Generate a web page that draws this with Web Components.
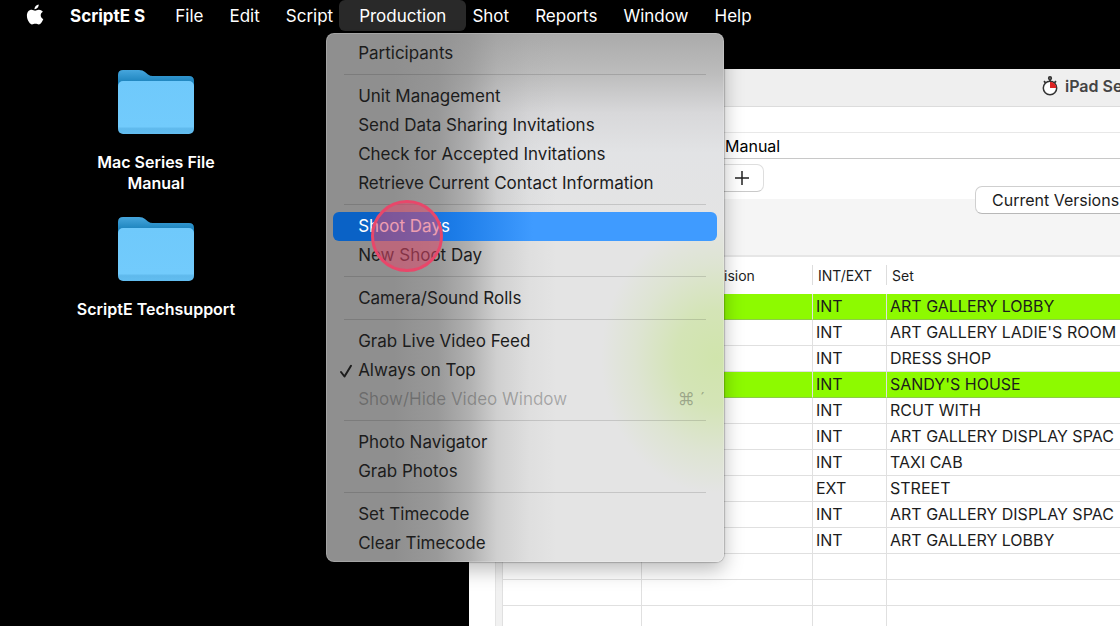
<!DOCTYPE html>
<html lang="en">
<head>
<meta charset="utf-8">
<title>ScriptE S</title>
<style>
  body { margin: 0; background: #000; font-family: Inter, "Liberation Sans", sans-serif; font-size: 16px; }
</style>
</head>
<body>
<mac-desktop>
  <menu-bar slot="bar">
    <menu-title strong>ScriptE S</menu-title>
    <menu-title>File</menu-title>
    <menu-title>Edit</menu-title>
    <menu-title>Script</menu-title>
    <menu-title open>Production
      <drop-menu slot="menu">
        <menu-row>Participants</menu-row>
        <menu-rule></menu-rule>
        <menu-row>Unit Management</menu-row>
        <menu-row>Send Data Sharing Invitations</menu-row>
        <menu-row>Check for Accepted Invitations</menu-row>
        <menu-row>Retrieve Current Contact Information</menu-row>
        <menu-rule></menu-rule>
        <menu-row active>Shoot Days</menu-row>
        <menu-row>New Shoot Day</menu-row>
        <menu-rule></menu-rule>
        <menu-row>Camera/Sound Rolls</menu-row>
        <menu-rule></menu-rule>
        <menu-row>Grab Live Video Feed</menu-row>
        <menu-row checked>Always on Top</menu-row>
        <menu-row disabled>Show/Hide Video Window<span slot="key">⌘ ´</span></menu-row>
        <menu-rule></menu-rule>
        <menu-row>Photo Navigator</menu-row>
        <menu-row>Grab Photos</menu-row>
        <menu-rule></menu-rule>
        <menu-row>Set Timecode</menu-row>
        <menu-row>Clear Timecode</menu-row>
      </drop-menu>
    </menu-title>
    <menu-title>Shot</menu-title>
    <menu-title>Reports</menu-title>
    <menu-title>Window</menu-title>
    <menu-title>Help</menu-title>
  </menu-bar>
  <desk-folder>Mac Series File Manual</desk-folder>
  <desk-folder>ScriptE Techsupport</desk-folder>
  <app-window slot="window">
    <span slot="title">iPad Se</span>
    <span slot="tab">Manual</span>
    <scene-table></scene-table>
  </app-window>
  <click-ring slot="pointer"></click-ring>
</mac-desktop>

<script>
function define(name, html, setup) {
  const template = document.createElement('template');
  template.innerHTML = html;
  customElements.define(name, class extends HTMLElement {
    constructor() {
      super();
      this.attachShadow({ mode: 'open' }).append(template.content.cloneNode(true));
    }
    connectedCallback() { if (setup) setup(this, this.shadowRoot); }
  });
}

define('mac-desktop', `
  <style>
    :host { display: block; position: relative; min-height: 100vh; overflow: hidden; background: #000; }
    nav { position: relative; z-index: 2; }
    .icons { display: flex; flex-direction: column; gap: 22px; width: 180px; padding: 37px 66px; }
  </style>
  <nav aria-label="Menu bar"><slot name="bar"></slot></nav>
  <div class="icons"><slot></slot></div>
  <slot name="window"></slot>
  <slot name="pointer"></slot>`);

define('menu-bar', `
  <style>
    :host { display: flex; height: 32px; padding-left: 26px; color: #fff; }
    svg { width: 18px; height: 22px; margin: 4px 13px 0 0; flex: none; }
  </style>
  <svg viewBox="0 0 18 22" fill="#fff" aria-hidden="true">
    <path d="M12.7 0.4c.1 1.300-.4 2.500-1.200 3.400-.8.900-1.900 1.500-3 1.400-.1-1.200.5-2.400 1.200-3.200.8-.9 2-1.500 3-1.600z"/>
    <path d="M16.900 7.800c-1.500.9-2.200 2-2.200 3.500 0 1.700 1 3.100 2.600 3.800-.4 1.200-1 2.300-1.800 3.400-.9 1.300-1.700 1.900-2.700 1.900-1.300 0-1.700-.7-3.400-.7-1.600 0-2.200.7-3.400.7-1.100 0-1.900-.8-2.900-2.200C1.800 16.400.900 14 .900 11.700c0-3.800 2.300-5.900 4.700-5.900 1.400 0 2.600.9 3.500.9.8 0 2.200-.9 3.800-.9 1.500 0 3 .7 4 2z"/>
  </svg>
  <slot></slot>`);

define('menu-title', `
  <style>
    :host { display: block; position: relative; height: 31px; }
    button { all: unset; box-sizing: border-box; height: 31px; padding: 0 13px; line-height: 28px; white-space: nowrap; font-size: 17px; font-weight: 400; }
    :host([strong]) button { padding-right: 17px; font-weight: 700; }
    :host([open]) { margin: 0 -7px; border-radius: 6px; background: #292929; }
    :host([open]) button { padding: 0 20px; }
    .menu { position: absolute; left: -13px; top: 33px; }
  </style>
  <button type="button"><slot></slot></button>
  <div class="menu"><slot name="menu"></slot></div>`);

define('drop-menu', `
  <style>
    :host {
      display: block; box-sizing: border-box; width: 398px; padding: 6px 7px 4px; border-radius: 8px; color: #1c1c1c;
      background:
        linear-gradient(90deg, #8f8f8f 17%, #8f8f8fe0 28%, #8f8f8f9c 36%, #8f8f8f3d 43%, #8f8f8f10 51%, #8f8f8f00 58%),
        radial-gradient(ellipse 115px 135px at 390px 325px, #d0e4ac 0, #d0e4acd0 35%, #d0e4ac50 70%, #d0e4ac00 100%),
        linear-gradient(180deg, #aaa 0, #bcbcbc 40px, #d8d8da 80px, #e2e3e5 120px, #e4e4e4 200px);
      box-shadow: inset 0 0 0 1px #ffffff30, 0 0 1px 1px #0003, 0 8px 20px #0004;
    }
  </style>
  <div role="menu"><slot></slot></div>`);

define('menu-row', `
  <style>
    :host { display: block; }
    button { all: unset; box-sizing: border-box; display: flex; align-items: center; width: 100%; height: 29px; padding: 0 12px 0 25px; position: relative; border-radius: 6px; font-size: 17px; line-height: 29px; white-space: nowrap; }
    .label { flex: 1; }
    :host([active]) button { color: #fff; background: linear-gradient(90deg, #0a62c6 10%, #1c7ce8 32%, #3f9bff 52%); }
    :host([disabled]) button { color: #1c1c1c50; }
    svg { display: none; position: absolute; left: 6px; top: 8px; width: 14px; height: 14px; }
    :host([checked]) svg { display: block; }
  </style>
  <button type="button" role="menuitem">
    <svg viewBox="0 0 14 14" fill="none" stroke="#1c1c1c" stroke-width="2" stroke-linecap="round" stroke-linejoin="round" aria-hidden="true"><path d="M2 8l3.500 4.500L12 1.800"/></svg>
    <span class="label"><slot></slot></span><slot name="key"></slot>
  </button>`, (host, root) => { root.querySelector('button').disabled = host.hasAttribute('disabled'); });

define('menu-rule', `
  <style>
    :host { display: block; height: 1px; margin: 6px 11px 7px; background: #0002; }
  </style>`);

define('desk-folder', `
  <style>
    :host { display: flex; flex-direction: column; align-items: center; gap: 17px; color: #fff; }
    svg { width: 78px; height: 66px; }
    span { width: 170px; text-align: center; font-size: 16px; font-weight: 600; line-height: 21px; }
  </style>
  <svg viewBox="0 0 78 66" aria-hidden="true">
    <defs>
      <linearGradient id="back" x1="0" y1="0" x2="0" y2="1"><stop offset="0" stop-color="#46a6dd"/><stop offset=".4" stop-color="#1c83bd"/></linearGradient>
      <linearGradient id="front" x1="0" y1="0" x2="0" y2="1"><stop offset="0" stop-color="#6fc9fb"/><stop offset=".86" stop-color="#72cbfc"/><stop offset=".9" stop-color="#5fb9ec"/><stop offset="1" stop-color="#62bdf0"/></linearGradient>
    </defs>
    <path fill="url(#back)" d="M1 6q0-5 5-5h16q4 0 6 2l3 2.500q2 1.500 5 1.500h36q5 0 5 5v20H1z"/>
    <rect x="1" y="12" width="76" height="53" rx="5" fill="url(#front)"/>
  </svg>
  <span><slot></slot></span>`);

define('app-window', `
  <style>
    :host { display: flex; flex-direction: column; position: absolute; left: 469px; top: 69px; right: 0; bottom: 0; overflow: hidden; background: #fff; color: #1c1c1c; }
    header { box-sizing: border-box; flex: none; display: flex; align-items: center; gap: 6px; height: 38px; padding: 0 0 3px 572px; background: #efefef; border-bottom: 1px solid #dcdcdc; font-weight: 600; color: #444; white-space: nowrap; }
    header svg { width: 18px; height: 20px; flex: none; }
    .strip { flex: none; height: 25px; border-bottom: 1px solid #e8e8e8; }
    .tab { flex: none; height: 25px; padding-left: 256px; border-bottom: 1px solid #c8c8c8; line-height: 26px; color: #000; }
    .tools { box-sizing: border-box; flex: none; display: flex; align-items: flex-start; justify-content: flex-start; gap: 211px; height: 98px; padding: 5px 0 0 211px; background: linear-gradient(#fff 40px, #f5f5f5 40px); border-bottom: 2px solid #e6e6e6; }
    .add { box-sizing: border-box; flex: none; width: 84px; height: 28px; padding: 0 0 0 54px; border: 1px solid #dedede; border-bottom-color: #c9c9c9; border-radius: 7px; background: #fff; line-height: 0; text-align: left; }
    .add svg { width: 14px; height: 14px; }
    select { appearance: none; flex: none; width: 170px; height: 28px; margin-top: 22px; padding: 0 16px; border: 1px solid #cfcfcf; border-bottom-color: #b8b8b8; border-radius: 7px; background: #fff; color: #1c1c1c; font: inherit; }
    .body { flex: 1; display: flex; min-height: 0; padding-left: 26px; }
    .body::before { content: ""; flex: none; width: 7px; background: #f1f1f1; border-left: 1px solid #e4e4e4; box-sizing: border-box; }
  </style>
  <header>
    <svg viewBox="0 0 18 20" fill="none" stroke="#333" stroke-width="1.500" aria-hidden="true">
      <circle cx="9" cy="12" r="6.700" fill="#fff"/>
      <path d="M9 12V5.800a6.200 6.200 0 0 1 6.200 6.200z" fill="#d22" stroke="none"/>
      <circle cx="9" cy="2.200" r="1.400" fill="#888"/><path d="M9 3.500v2M3 5.200l1.600 1.600M15 5.200l-1.600 1.600" stroke-width="1.800"/>
    </svg>
    <slot name="title"></slot>
  </header>
  <div class="strip"></div>
  <div class="tab"><slot name="tab"></slot></div>
  <div class="tools">
    <button class="add" type="button" aria-label="Add"><svg viewBox="0 0 14 14" stroke="#222" stroke-width="1.500" aria-hidden="true"><path d="M7 0v14M0 7h14"/></svg></button>
    <select aria-label="Versions"><option>Current Versions</option></select>
  </div>
  <div class="body"><slot></slot></div>`);

define('scene-table', `
  <style>
    :host { display: block; flex: 1; min-width: 0; overflow: hidden; }
    table { width: 100%; table-layout: fixed; border-collapse: separate; border-spacing: 0; border-left: 1px solid #e0e0e0; }
    .first { width: 139px; } .second { width: 171px; } .third { width: 74px; }
    th { box-sizing: border-box; height: 37px; padding: 0 5px; text-align: left; font-size: 14px; font-weight: 400; white-space: nowrap; background: linear-gradient(#ddd, #ddd) right 8px / 1px 20px no-repeat; }
    th:nth-child(2) { padding-left: 82px; }
    th:last-child { background: none; }
    td { box-sizing: border-box; height: 26px; padding: 0 3px; border-right: 1px solid #e0e0e0; border-bottom: 1px solid #e0e0e0; line-height: 25px; white-space: nowrap; overflow: hidden; }
    td:last-child { border-right: 0; }
    .marked td { background: #8dfa00; border-bottom-color: #8ccb4a; }
  </style>
  <table>
    <colgroup><col class="first"><col class="second"><col class="third"><col></colgroup>
    <thead><tr><th></th><th>ision</th><th>INT/EXT</th><th>Set</th></tr></thead>
    <tbody></tbody>
  </table>`, (host, root) => {
  const scenes = [
    ['INT', 'ART GALLERY LOBBY', true],
    ['INT', "ART GALLERY LADIE'S ROOM"],
    ['INT', 'DRESS SHOP'],
    ['INT', "SANDY'S HOUSE", true],
    ['INT', 'RCUT WITH'],
    ['INT', 'ART GALLERY DISPLAY SPAC'],
    ['INT', 'TAXI CAB'],
    ['EXT', 'STREET'],
    ['INT', 'ART GALLERY DISPLAY SPAC'],
    ['INT', 'ART GALLERY LOBBY'],
    ['', ''], ['', ''], ['', '']
  ];
  const body = root.querySelector('tbody');
  body.replaceChildren();
  for (const [place, set, marked] of scenes) {
    const row = body.insertRow();
    if (marked) row.className = 'marked';
    for (const text of ['', '', place, set]) row.insertCell().textContent = text;
  }
});

define('click-ring', `
  <style>
    :host { position: absolute; z-index: 3; left: 371px; top: 200px; box-sizing: border-box; width: 72px; height: 72px; border: 3px solid #e8476a; border-radius: 50%; background: #e0476a88; pointer-events: none; }
  </style>`);
</script>
</body>
</html>
